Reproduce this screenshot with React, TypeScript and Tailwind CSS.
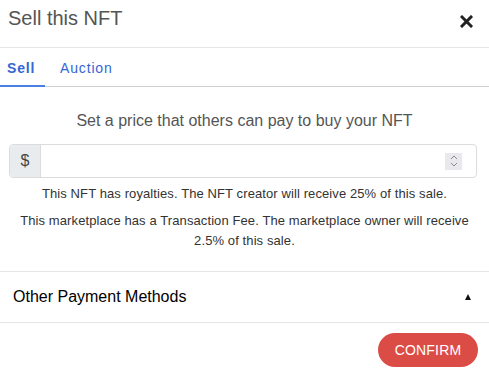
function CloseIcon() {
    return (
        <svg width="13" height="13" viewBox="0 0 13 13">
            <path d="M2 2 L11 11 M11 2 L2 11" stroke="#222" strokeWidth="3" strokeLinecap="square" />
        </svg>
    );
}

function Spinner() {
    return (
        <div className="w-[17px] h-[17px] bg-[#e9e9ed] flex flex-col items-center justify-center gap-[2px]">
            <svg width="8" height="5" viewBox="0 0 8 5">
                <path d="M1 4 L4 1 L7 4" fill="none" stroke="#8a8a8f" strokeWidth="1" />
            </svg>
            <svg width="8" height="5" viewBox="0 0 8 5">
                <path d="M1 1 L4 4 L7 1" fill="none" stroke="#8a8a8f" strokeWidth="1" />
            </svg>
        </div>
    );
}

export default function App() {
    return (
        <div className="w-[489px] h-[377px] bg-white font-['Liberation_Sans',Arial,sans-serif] overflow-hidden">
            {/* header */}
            <div className="h-[48px] flex justify-between items-start border-b border-[#e6e6e6] pl-[8px] pr-[16px]">
                <h2 className="text-[20px] leading-[24px] pt-[6px] text-[#555]">Sell this NFT</h2>
                <div className="pt-[15px]">
                    <CloseIcon />
                </div>
            </div>

            {/* tabs */}
            <div className="flex h-[39px] border-b border-[#cfcfcf] text-[14px] tracking-[0.85px] text-[#3466d5]">
                <div className="w-[45px] pl-[7px] pt-[10px] font-bold border-b-2 border-[#4a80e4] -mb-px">Sell</div>
                <div className="ml-[15px] pt-[10px]">Auction</div>
            </div>

            {/* body */}
            <div className="px-[9px] pt-[23px]">
                <p className="text-center text-[16px] leading-[22px] text-[#555]">
                    Set a price that others can pay to buy your NFT
                </p>
                <div className="mt-[12px] flex h-[34px] border border-[#dcdcdc] rounded-[4px] w-[468px]">
                    <div className="w-[31px] bg-[#e9ecef] border-r border-[#dcdcdc] rounded-l-[4px] flex items-center justify-center text-[16px] text-[#444]">
                        $
                    </div>
                    <div className="flex-1 flex items-center justify-end pr-[14px]">
                        <Spinner />
                    </div>
                </div>
                <p className="mt-[6px] text-center text-[13px] leading-[20px] tracking-[0.1px] text-[#333]">
                    This NFT has royalties. The NFT creator will receive 25% of this sale.
                </p>
                <p className="mt-[7px] text-center text-[13px] leading-[20px] tracking-[0.1px] text-[#333]">
                    This marketplace has a Transaction Fee. The marketplace owner will receive 2.5% of this sale.
                </p>
            </div>

            {/* other payment methods */}
            <div className="mt-[20px] h-[52px] border-y border-[#e6e6e6] flex items-center justify-between pl-[13px] pr-[18px]">
                <span className="text-[16px] text-black">Other Payment Methods</span>
                <svg width="6" height="6" viewBox="0 0 6 6">
                    <path d="M3 0 L6 6 L0 6 Z" fill="#111" />
                </svg>
            </div>

            {/* footer */}
            <div className="flex justify-end pr-[11px] pt-[10px]">
                <button className="w-[100px] h-[34px] rounded-full bg-[#dc4c46] text-white text-[14px] font-medium tracking-[0.2px]">
                    CONFIRM
                </button>
            </div>
        </div>
    );
}
